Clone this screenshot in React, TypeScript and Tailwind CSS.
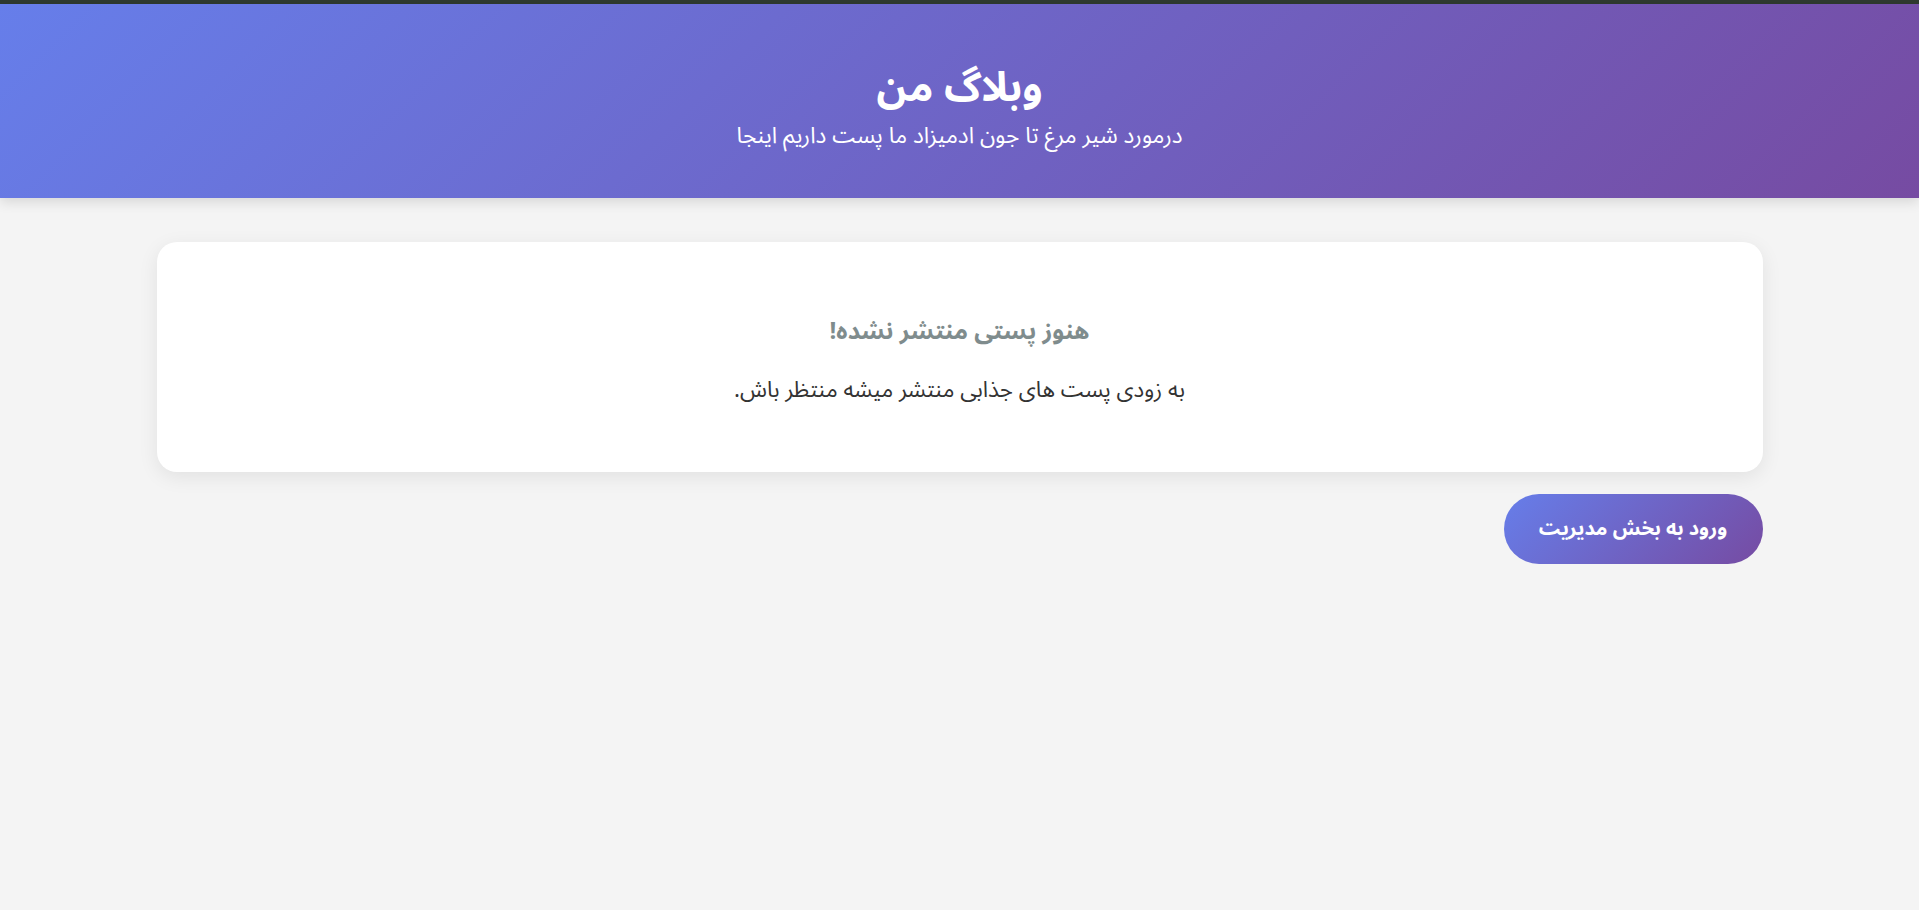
export default function App() {
    return (
        <div
            dir="rtl"
            className="min-h-[910px] bg-[#f4f4f4] text-[#333] font-['Noto_Sans_Arabic','Noto_Sans_Arabic_UI','DejaVu_Sans',sans-serif]"
        >
            {/* top strip */}
            <div className="h-[4px] bg-[#2f3a30]" />

            {/* Header */}
            <header className="bg-[linear-gradient(135deg,#667eea_0%,#764ba2_100%)] text-white text-center pt-[60px] pb-[47px] shadow-[0_4px_12px_rgba(0,0,0,0.12)]">
                <h1 className="text-[41px] leading-[48px] font-bold">وبلاگ من</h1>
                <p className="mt-[9px] text-[22.6px] leading-[30px]">درمورد شیر مرغ تا جون ادمیزاد ما پست داریم اینجا</p>
            </header>

            <main className="max-w-[1606px] mx-auto pt-[44px]">
                {/* Empty state */}
                <div className="bg-white rounded-[20px] shadow-[0_5px_20px_rgba(0,0,0,0.08)] text-center pt-[74px] pb-[66px]">
                    <h2 className="text-[24px] leading-[32px] font-bold text-[#7f8c8d]">هنوز پستی منتشر نشده!</h2>
                    <p className="mt-[26px] text-[22.3px] leading-[32px] text-[#333]">به زودی پست های جذابی منتشر میشه منتظر باش.</p>
                </div>

                <div className="flex mt-[22px]">
                    <a
                        href="#"
                        className="w-[259px] h-[70px] rounded-full bg-[linear-gradient(135deg,#667eea_0%,#764ba2_100%)] text-white font-bold text-[20px] flex items-center justify-center"
                    >
                        ورود به بخش مدیریت
                    </a>
                </div>
            </main>
        </div>
    );
}
